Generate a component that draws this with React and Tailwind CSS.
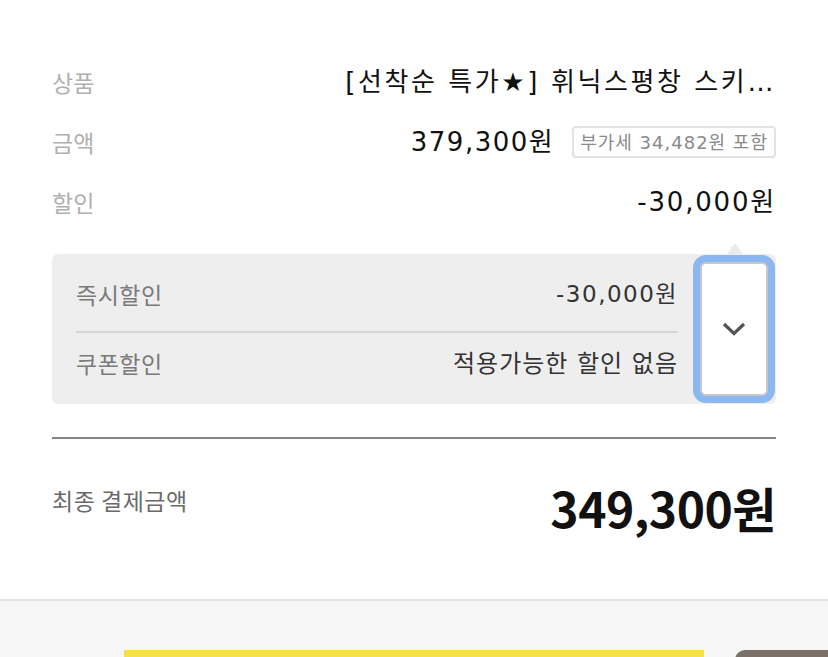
import React from "react";

const cjk = { fontFamily: '"Noto Sans CJK KR", "Noto Sans", sans-serif' };
const num = { fontFamily: '"DejaVu Sans", "Noto Sans CJK KR", sans-serif' };

function Row({ label, children }) {
  return (
    <div className="flex h-[60px] items-center justify-between">
      <span className="shrink-0 text-[23px] text-[#b0b0b0]" style={cjk}>{label}</span>
      {children}
    </div>
  );
}

export default function App() {
  return (
    <div className="h-[657px] w-[828px] overflow-hidden bg-white" style={cjk}>
      <div className="px-[52px] pt-[52px]">
        <Row label="상품">
          <span className="whitespace-nowrap text-[26px] tracking-[2.6px] text-[#111]" style={num}>
            [선착순 특가★] 휘닉스평창 스키…
          </span>
        </Row>
        <Row label="금액">
          <div className="flex items-center">
            <span className="text-[26px] tracking-[1.5px] text-[#111]" style={num}>379,300원</span>
            <span
              className="ml-[18px] flex h-[32px] items-center rounded-[4px] border-2 border-[#e2e2e2] px-[6px] text-[18px] tracking-[1px] text-[#8a8a8a]"
              style={num}
            >
              부가세 34,482원 포함
            </span>
          </div>
        </Row>
        <Row label="할인">
          <span className="text-[26px] tracking-[1.8px] text-[#111]" style={num}>-30,000원</span>
        </Row>

        <div className="relative mt-[22px] flex h-[150px] rounded-[6px] bg-[#eeeeee] pl-[24px] pr-[8px]">
          <div className="absolute right-[33px] top-[-11px] h-0 w-0 border-x-[8px] border-b-[11px] border-x-transparent border-b-[#ebebeb]" />
          <div className="flex flex-1 flex-col">
            <div className="flex h-[77px] items-center justify-between pt-[4px]">
              <span className="text-[23px] tracking-[0.5px] text-[#7a7a7a]">즉시할인</span>
              <span className="text-[23px] tracking-[1.5px] text-[#333]" style={num}>-30,000원</span>
            </div>
            <div className="h-[2px] bg-[#d6d6d6]" />
            <div className="flex h-[71px] items-center justify-between pb-[10px]">
              <span className="text-[23px] tracking-[0.5px] text-[#7a7a7a]">쿠폰할인</span>
              <span className="text-[24px] tracking-[1px] text-[#333]" style={num}>적용가능한 할인 없음</span>
            </div>
          </div>
          <div className="ml-[22px] flex items-center">
            <button className="flex h-[134px] w-[68px] items-center justify-center rounded-[6px] border-2 border-[#c8c8c8] bg-white shadow-[0_0_0_7px_#8cb8f2]">
              <svg width="24" height="14" viewBox="0 0 24 14">
                <path d="M2 2 L12 11.5 L22 2" fill="none" stroke="#555" strokeWidth="3.2" />
              </svg>
            </button>
          </div>
        </div>

        <div className="mt-[33px] h-[2px] bg-[#858585]" />

        <div className="flex h-[124px] items-center justify-between">
          <span className="-mt-[2px] text-[23px] tracking-[0.5px] text-[#6a6a6a]">최종 결제금액</span>
          <span className="mt-[12px] text-[48px] font-bold tracking-[-0.5px] text-[#111]">349,300원</span>
        </div>
      </div>

      <div className="mt-[36px] h-[100px] border-t-2 border-[#e4e4e4] bg-[#f6f6f6]">
        <div className="mt-[49px] flex">
          <div className="ml-[124px] h-[20px] w-[580px] bg-[#f5df4d]" />
          <div className="ml-[31px] h-[20px] flex-1 rounded-tl-[10px] bg-[#7b7067]" />
        </div>
      </div>
    </div>
  );
}
